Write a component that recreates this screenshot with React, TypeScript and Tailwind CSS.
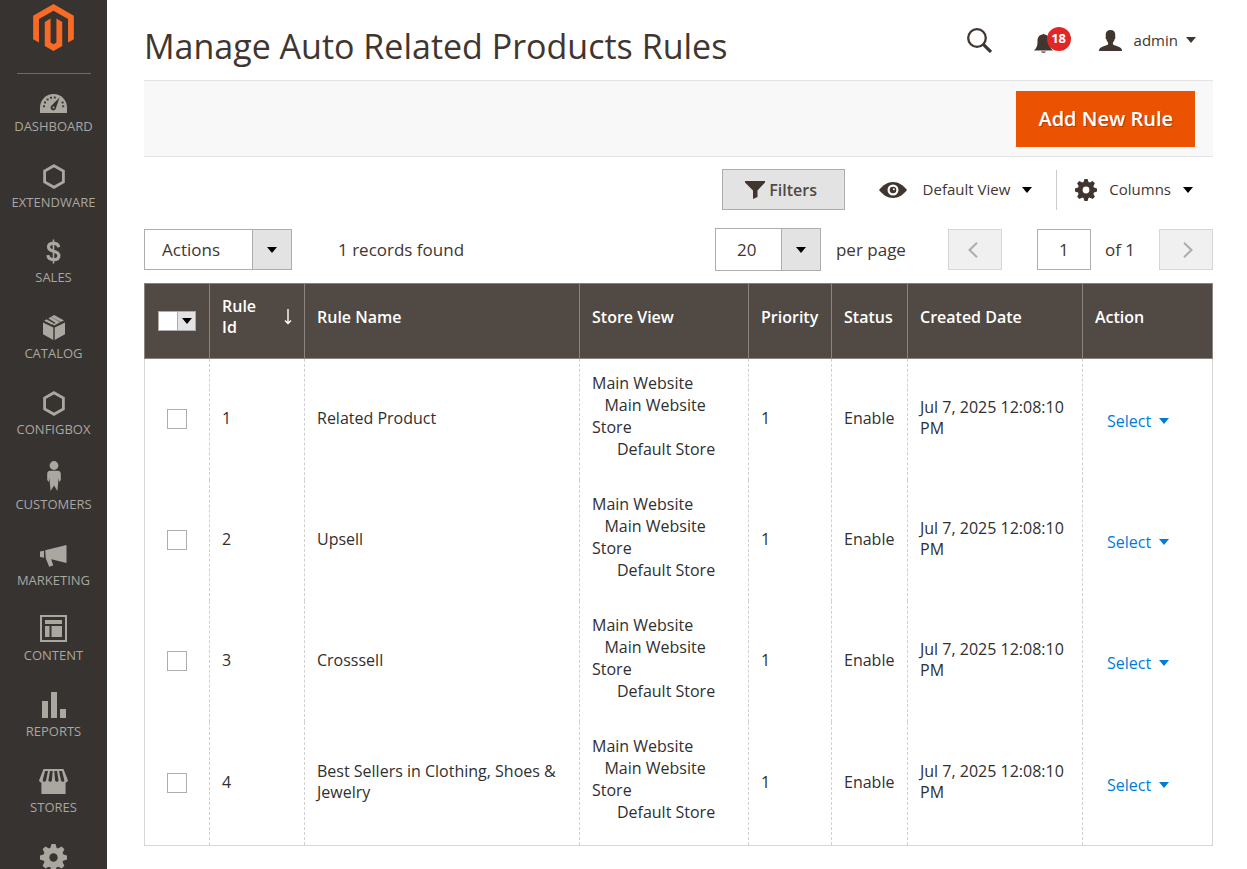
import React from "react";

type IconProps = { className?: string };

function Logo() {
  return (
    <svg viewBox="1.6 0 20.8 24" className="h-[47px] w-[41px]" fill="#f96a25" aria-hidden="true">
      <path d="M12 24l-4.455-2.572V9.143l2.97-1.715v12.287L12 20.572l1.485-.857V7.428l2.97 1.715v12.285L12 24zM22.391 6v12l-2.969 1.714V7.714L12 3.43 4.574 7.714v12L1.609 18V6L12 0l10.391 6z" />
    </svg>
  );
}

function GaugeIcon() {
  return (
    <svg viewBox="0 0 27 19" className="h-[19px] w-[27px]" aria-hidden="true">
      <path d="M0 19v-5.5C0 6 6 0 13.5 0S27 6 27 13.5V19z" fill="currentColor" />
      <g fill="#373330">
        <rect x="3" y="11.4" width="2" height="1.8" />
        <rect x="4" y="7.6" width="2" height="1.8" />
        <rect x="6.6" y="4.6" width="2" height="1.8" />
        <rect x="10" y="2.8" width="2" height="1.8" />
        <rect x="13.8" y="2.6" width="2" height="1.8" />
        <rect x="21.6" y="7.6" width="2" height="1.8" />
        <rect x="22.2" y="11.4" width="2" height="1.8" />
        <path d="M19.6 3.6l-3.6 10.2a2.7 2.7 0 1 1-4.4-2.2z" />
      </g>
      <circle cx="13.5" cy="13.6" r="1" fill="currentColor" />
    </svg>
  );
}

function HexIcon() {
  return (
    <svg viewBox="0 0 22 25" className="h-[25px] w-[22px]" aria-hidden="true">
      <path d="M11 1.7l9.4 5.4v10.8L11 23.3l-9.4-5.4V7.1z" fill="none" stroke="currentColor" strokeWidth="2.8" />
    </svg>
  );
}

function DollarIcon() {
  return (
    <svg viewBox="0 0 15 25" className="h-[25px] w-[15px]" fill="none" stroke="currentColor" aria-hidden="true">
      <path
        d="M12.7 8.2C12.4 5.6 10.4 4.3 7.5 4.3C4.6 4.3 2.5 5.7 2.5 8.1C2.5 10.8 4.9 11.5 7.5 12.2C10.4 12.9 12.9 13.7 12.9 16.7C12.9 19.3 10.7 20.7 7.6 20.7C4.3 20.7 2.2 19.1 1.9 16.2"
        strokeWidth="3.2"
      />
      <path d="M7.5 .5v24" strokeWidth="1.6" />
    </svg>
  );
}

function BoxIcon() {
  return (
    <svg viewBox="0 0 22 25" className="h-[25px] w-[22px]" fill="currentColor" aria-hidden="true">
      <path d="M0 7.5l10.3 4.9V25L0 19.3zM22 7.5l-10.3 4.9V25L22 19.3z" />
      <path d="M11.2 0L21 5.4l-3.2 1.6L7.900 1.800zM5.200 3.200L8 1.900l1 .5L17.200 7.300 11.200 10.600 9.300 9.700 12.600 8zM3.400 4.300L11.200 8.400 8.700 9.600 1.200 5.700z" />
    </svg>
  );
}

function PersonIcon() {
  return (
    <svg viewBox="0 0 14 30" className="h-[30px] w-[14px]" fill="currentColor" aria-hidden="true">
      <circle cx="7" cy="4.5" r="4.4" />
      <path d="M3.2 9.8h7.6c1.8 0 3 1.2 3 3V19l-1.6 2-.6-4-1.2 13L7 24.5 3.6 30 2.4 17l-.6 4-1.6-2v-6.2c0-1.8 1.2-3 3-3z" />
    </svg>
  );
}

function HornIcon() {
  return (
    <svg viewBox="0 0 27 22" className="h-[22px] w-[27px]" fill="currentColor" aria-hidden="true">
      <path d="M0 6.5l4-.8v7l-4-.8zM5.2 5.3L26.5 0v18L11.3 14.3l1.9 6.2-4 1.3L5.800 13.500z" />
    </svg>
  );
}

function LayoutIcon() {
  return (
    <svg viewBox="0 0 27 27" className="h-[27px] w-[27px]" aria-hidden="true">
      <rect x="1" y="1" width="25" height="25" fill="none" stroke="currentColor" strokeWidth="2" />
      <g fill="currentColor">
        <rect x="5" y="5" width="17" height="4" />
        <rect x="5" y="11" width="4.5" height="11" />
        <rect x="11.5" y="11" width="10.5" height="11" />
      </g>
    </svg>
  );
}

function BarsIcon() {
  return (
    <svg viewBox="0 0 24 26" className="h-[26px] w-[24px]" fill="currentColor" aria-hidden="true">
      <path d="M0 9h6v17H0zM9 0h6v26H9zM18 17h6v9h-6z" />
    </svg>
  );
}

function StoreIcon() {
  return (
    <svg viewBox="0 0 29 25" className="h-[25px] w-[29px]" aria-hidden="true">
      <path d="M4.5 0h20L29 11.5c-.6 1.5-1.6 2-2.4 2V25H2.4V13.5c-.8 0-1.8-.5-2.4-2z" fill="currentColor" />
      <g fill="#373330">
        <path d="M6 2h3L7 11.500c-.8 1.800-2.600 1.800-3.400 0z" />
        <path d="M11 2h2.700l-.8 9.500c-.8 1.800-2.800 1.800-3.500 0z" />
        <path d="M15.300 2H18l1.600 9.500c-.8 1.800-2.800 1.800-3.500 0z" />
        <path d="M20 2h3l2.400 9.500c-.6 1.800-2.500 1.800-3.400 0z" />
      </g>
    </svg>
  );
}

function GearIcon({ className, hole }: { className: string; hole: string }) {
  return (
    <svg viewBox="-12 -12 24 24" className={className} aria-hidden="true">
      <g fill="currentColor">
        {[0, 45, 90, 135].map((angle) => (
          <path key={angle} transform={`rotate(${angle})`} d="M-3 -8L-1.7 -12H1.7L3 -8V8L1.7 12H-1.7L-3 8z" />
        ))}
        <circle r="9" />
      </g>
      <circle r="3.700" fill={hole} />
    </svg>
  );
}

function Caret({ className = "" }: IconProps) {
  return (
    <svg viewBox="0 0 10 6" className={`h-[6px] w-[10px] shrink-0 ${className}`} fill="currentColor" aria-hidden="true">
      <path d="M0 0h10L5 6z" />
    </svg>
  );
}

const navItems = [
  { label: "Dashboard", icon: <GaugeIcon /> },
  { label: "Extendware", icon: <HexIcon /> },
  { label: "Sales", icon: <DollarIcon /> },
  { label: "Catalog", icon: <BoxIcon /> },
  { label: "Configbox", icon: <HexIcon /> },
  { label: "Customers", icon: <PersonIcon /> },
  { label: "Marketing", icon: <HornIcon /> },
  { label: "Content", icon: <LayoutIcon /> },
  { label: "Reports", icon: <BarsIcon /> },
  { label: "Stores", icon: <StoreIcon /> },
];

const rules = [
  { id: 1, name: "Related Product" },
  { id: 2, name: "Upsell" },
  { id: 3, name: "Crosssell" },
  { id: 4, name: "Best Sellers in Clothing, Shoes & Jewelry" },
];

function Sidebar() {
  return (
    <aside className="sticky top-0 flex h-screen w-[107px] shrink-0 flex-col items-center overflow-hidden bg-[#373330] pt-1">
      <a href="#home" aria-label="Home">
        <Logo />
      </a>
      <div className="mt-[22px] w-[74px] shrink-0 border-t border-[#736963]" />
      <nav className="mt-[9px] grid h-[832px] w-full shrink-0 auto-rows-fr text-[13px] leading-4 text-[#aaa6a0]">
        {navItems.map((item) => (
          <a key={item.label} href={`#${item.label.toLowerCase()}`} className="flex flex-col items-center gap-[5px] uppercase">
            <span className="flex h-[30px] items-end">{item.icon}</span>
            <span>{item.label}</span>
          </a>
        ))}
        <a href="#system" aria-label="System" className="flex flex-col items-center pt-[5px]">
          <GearIcon className="h-[27px] w-[27px]" hole="#373330" />
        </a>
      </nav>
    </aside>
  );
}

function TopBar() {
  return (
    <header className="flex h-[80px] items-start justify-between">
      <h1 className="pt-[22px] text-[34px] leading-[48px] text-[#41362f]">Manage Auto Related Products Rules</h1>
      <div className="flex h-[80px] items-center pr-[17px] text-[#41362f]">
        <button type="button" aria-label="Search" className="mr-[42px]">
          <svg viewBox="0 0 25 25" className="h-[25px] w-[25px]" fill="none" stroke="currentColor" aria-hidden="true">
            <circle cx="10" cy="10" r="8.8" strokeWidth="2.3" />
            <path d="M16.3 16.3L24 24" strokeWidth="3.2" />
          </svg>
        </button>
        <button type="button" aria-label="Notifications" className="relative mr-[28px] flex h-[26px] w-[37px] items-end">
          <svg viewBox="0 0 19 20" className="h-[20px] w-[19px]" fill="currentColor" aria-hidden="true">
            <path d="M8.5 1.5a1.2 1.2 0 0 1 2 0C14 2 15.5 4.5 15.5 8c0 4.5.5 6.5 3.5 9.5H0C3 14.5 3.5 12.5 3.5 8c0-3.5 1.5-6 5-6.5zM7 18.5h5c-.8 1.8-4.2 1.8-5 0z" />
          </svg>
          <span className="absolute top-0 right-0 flex h-[24px] w-[24px] items-center justify-center rounded-full bg-[#e22626] text-[13px] font-bold text-white">
            18
          </span>
        </button>
        <button type="button" className="flex items-center text-[15px]">
          <svg viewBox="0 0 23 21" className="mr-3 h-[21px] w-[23px]" fill="currentColor" aria-hidden="true">
            <path d="M11.5 0c3 0 4.8 1.8 4.8 4.8 0 1-.1 1.3-.2 2 .7.3.3 2.2-.5 2.5-.4 1.7-1 2.700-1.700 3.300v1.700c.8 1.200 3.400 1.600 5.600 2.400 2.300.8 3.500 2 3.500 4.300H0c0-2.300 1.200-3.500 3.500-4.300 2.200-.8 4.800-1.200 5.600-2.400v-1.700c-.7-.6-1.300-1.600-1.700-3.300-.8-.3-1.200-2.200-.5-2.500-.1-.7-.2-1-.2-2C6.700 1.800 8.500 0 11.500 0z" />
          </svg>
          admin
          <Caret className="ml-2" />
        </button>
      </div>
    </header>
  );
}

function SelectBox({
  label,
  options,
  boxClass,
  textClass,
}: {
  label: string;
  options: string[];
  boxClass: string;
  textClass: string;
}) {
  return (
    <div className={`relative ${boxClass}`}>
      <select aria-label={label} className={`h-full w-full appearance-none border border-[#adadad] bg-white text-[17px] text-[#41362f] ${textClass}`}>
        {options.map((option) => (
          <option key={option}>{option}</option>
        ))}
      </select>
      <span className="pointer-events-none absolute inset-y-0 right-0 flex w-10 items-center justify-center border border-[#adadad] bg-[#e3e3e3] text-black">
        <Caret />
      </span>
    </div>
  );
}

function GridControls() {
  return (
    <>
      <div className="flex items-center justify-end pt-3 pr-5 text-[15px] text-[#41362f]">
        <button
          type="button"
          className="mr-[34px] flex h-[41px] w-[123px] items-center justify-center gap-1 border border-[#adadad] bg-[#e3e3e3] pr-1 text-base font-semibold text-[#514943]"
        >
          <svg viewBox="0 0 20 18" className="h-[18px] w-[20px] text-[#41362f]" fill="currentColor" aria-hidden="true">
            <path d="M0 0h20v1.5L12.5 9.5v6.5L8 18V9.5L0 1.5z" />
          </svg>
          Filters
        </button>
        <button type="button" className="flex items-center">
          <svg viewBox="0 0 28 16" className="mr-4 h-[16px] w-[28px]" aria-hidden="true">
            <path d="M0 8C4 3 8.5 0 14 0s10 3 14 8c-4 5-8.5 8-14 8S4 13 0 8z" fill="currentColor" />
            <circle cx="14" cy="8" r="4.4" fill="none" stroke="white" strokeWidth="2.2" />
            <circle cx="14.8" cy="7.2" r="1" fill="white" />
          </svg>
          Default View
          <Caret className="ml-3 text-black" />
        </button>
        <div className="mr-[18px] ml-6 h-10 border-l border-[#cccccc]" />
        <button type="button" className="flex items-center">
          <GearIcon className="mr-3 h-[22px] w-[22px]" hole="white" />
          Columns
          <Caret className="ml-3 text-black" />
        </button>
      </div>

      <div className="mt-[18px] flex items-center text-[17px] text-[#41362f]">
        <SelectBox label="Mass actions" options={["Actions", "Delete", "Enable", "Disable"]} boxClass="h-[41px] w-[148px]" textClass="pl-[17px]" />
        <p className="ml-[46px]">1 records found</p>
        <div className="ml-auto flex items-center">
          <SelectBox label="Rows per page" options={["20", "30", "50", "100"]} boxClass="h-[43px] w-[106px]" textClass="pl-[21px]" />
          <span className="ml-[15px]">per page</span>
          <button
            type="button"
            aria-label="Previous page"
            disabled
            className="ml-[42px] flex h-[41px] w-[54px] items-center justify-center border border-[#d6d6d6] bg-[#f0f0f0] pr-1 text-[#adadad]"
          >
            <svg viewBox="0 0 10 16" className="h-4 w-[10px]" fill="none" stroke="currentColor" strokeWidth="2" aria-hidden="true">
              <path d="M9 .8L1.500 8 9 15.200" />
            </svg>
          </button>
          <input aria-label="Current page" defaultValue="1" className="ml-[35px] h-[41px] w-[54px] border border-[#adadad] bg-white text-center" />
          <span className="ml-[14px]">of 1</span>
          <button
            type="button"
            aria-label="Next page"
            disabled
            className="ml-[24px] flex h-[41px] w-[54px] items-center justify-center border border-[#d6d6d6] bg-[#f0f0f0] pl-1 text-[#adadad]"
          >
            <svg viewBox="0 0 10 16" className="h-4 w-[10px]" fill="none" stroke="currentColor" strokeWidth="2" aria-hidden="true">
              <path d="M1 .8L8.500 8 1 15.200" />
            </svg>
          </button>
        </div>
      </div>
    </>
  );
}

function RulesTable() {
  const head = "border border-[#8a837f] px-3 pb-2 text-left font-semibold";
  const cell = "border-l border-dashed border-[#d0d0d0] px-3 pb-[2px]";
  return (
    <table className="mt-3 w-full table-fixed border-collapse border border-[#d6d6d6] text-base leading-[21px] text-[#303030]">
      <colgroup>
        <col className="w-[65px]" />
        <col className="w-[95px]" />
        <col />
        <col className="w-[169px]" />
        <col className="w-[83px]" />
        <col className="w-[76px]" />
        <col className="w-[175px]" />
        <col className="w-[130px]" />
      </colgroup>
      <thead>
        <tr className="h-[75px] bg-[#514943] text-white">
          <th className="border border-[#8a837f]">
            <div className="mx-auto flex h-5 w-[38px] border border-[#adadad] bg-white">
              <input type="checkbox" aria-label="Select all rules" className="h-full w-[18px] appearance-none bg-white" />
              <button type="button" aria-label="Selection options" className="flex flex-1 items-center justify-center border-l border-[#adadad] bg-[#e3e3e3] text-black">
                <Caret />
              </button>
            </div>
          </th>
          <th className={head}>
            <button type="button" className="flex w-full items-center justify-between text-left">
              <span className="w-10">Rule Id</span>
              <svg viewBox="0 0 8 16" className="h-4 w-2" fill="none" stroke="currentColor" strokeWidth="1.4" aria-hidden="true">
                <path d="M4 0v14M1 11.500l3 3 3-3" />
              </svg>
            </button>
          </th>
          <th className={head}>Rule Name</th>
          <th className={head}>Store View</th>
          <th className={head}>Priority</th>
          <th className={head}>Status</th>
          <th className={head}>Created Date</th>
          <th className={head}>Action</th>
        </tr>
      </thead>
      <tbody>
        {rules.map((rule) => (
          <tr key={rule.id} className="h-[121px] last:h-[124px]">
            <td>
              <input
                type="checkbox"
                aria-label={`Select rule ${rule.id}`}
                className="mx-auto block h-5 w-5 appearance-none border border-[#adadad] bg-white checked:bg-[#514943]"
              />
            </td>
            <td className={cell}>{rule.id}</td>
            <td className={cell}>{rule.name}</td>
            <td className={`${cell} pt-[13px] align-top leading-[22px]`}>
              Main Website
              <br />
              {"\u00a0\u00a0\u00a0"}Main Website Store
              <br />
              {"\u00a0\u00a0\u00a0\u00a0\u00a0\u00a0"}Default Store
            </td>
            <td className={cell}>1</td>
            <td className={cell}>Enable</td>
            <td className={cell}>Jul 7, 2025 12:08:10 PM</td>
            <td className={cell}>
              <button type="button" className="flex items-center gap-2 pt-[6px] pl-3 text-[#007bdb]">
                Select
                <Caret />
              </button>
            </td>
          </tr>
        ))}
      </tbody>
    </table>
  );
}

export default function App() {
  return (
    <div className="flex min-h-screen bg-white font-['Open_Sans',sans-serif]">
      <Sidebar />
      <main className="min-w-0 flex-1 pr-[34px] pb-5 pl-[37px]">
        <TopBar />
        <div className="flex h-[77px] items-center justify-end border-y border-[#e3e3e3] bg-[#f8f8f8] pr-[18px]">
          <button
            type="button"
            className="h-[56px] bg-[#eb5202] px-[22px] text-[20px] font-semibold text-white [text-shadow:1px_1px_0_rgba(0,0,0,0.25)]"
          >
            Add New Rule
          </button>
        </div>
        <GridControls />
        <RulesTable />
      </main>
    </div>
  );
}
